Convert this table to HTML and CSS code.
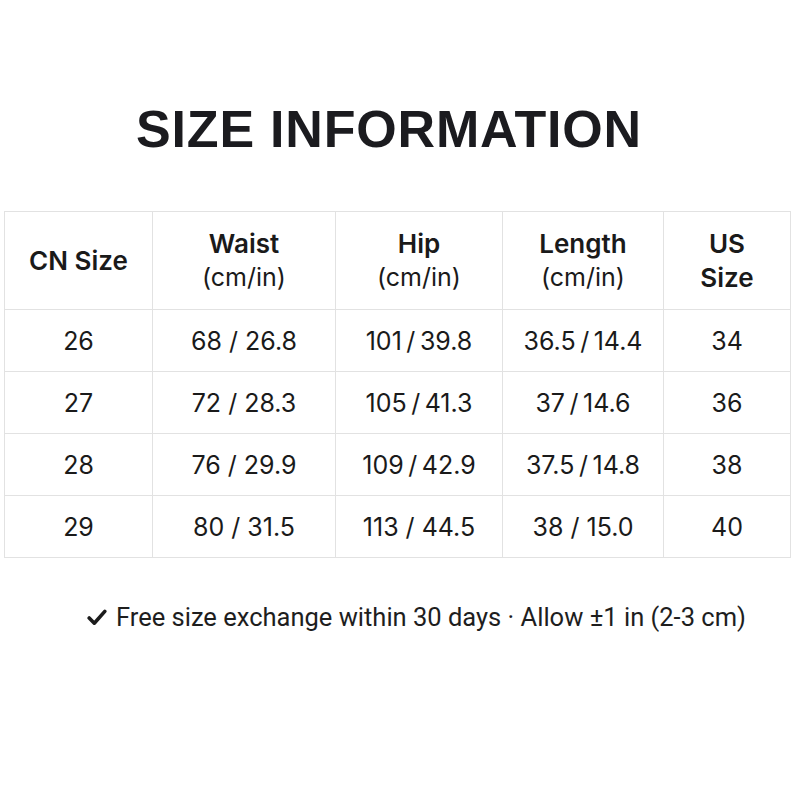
FILE: index.html
```html
<!DOCTYPE html>
<html>
<head>
<meta charset="utf-8">
<link rel="stylesheet" href="styles.css">
</head>
<body>
<div class="page">
  <h1 class="title">SIZE INFORMATION</h1>
  <table class="sizes">
    <colgroup>
      <col class="c1"><col class="c2"><col class="c3"><col class="c4"><col class="c5">
    </colgroup>
    <thead>
      <tr>
        <th><span class="h">CN Size</span></th>
        <th><span class="h">Waist</span><span class="sub">(cm/in)</span></th>
        <th><span class="h">Hip</span><span class="sub">(cm/in)</span></th>
        <th><span class="h">Length</span><span class="sub">(cm/in)</span></th>
        <th><span class="h">US</span><span class="h">Size</span></th>
      </tr>
    </thead>
    <tbody>
      <tr><td>26</td><td>68 / 26.8</td><td>101&#8201;/&#8201;39.8</td><td>36.5&#8201;/&#8201;14.4</td><td>34</td></tr>
      <tr><td>27</td><td>72 / 28.3</td><td>105&#8201;/&#8201;41.3</td><td>37&#8201;/&#8201;14.6</td><td>36</td></tr>
      <tr><td>28</td><td>76 / 29.9</td><td>109&#8201;/&#8201;42.9</td><td>37.5&#8201;/&#8201;14.8</td><td>38</td></tr>
      <tr><td>29</td><td>80 / 31.5</td><td>113 / 44.5</td><td>38 / 15.0</td><td>40</td></tr>
    </tbody>
  </table>
  <p class="note">
    <svg class="check" viewBox="0 0 20 17" width="20" height="17"><path d="M2.2 9 L7.3 14.2 L17.8 2.4" fill="none" stroke="#1c1c1c" stroke-width="3.6" stroke-linecap="round" stroke-linejoin="round"/></svg>
    <span>Free size exchange within 30 days · Allow ±1 in (2-3 cm)</span>
  </p>
</div>
</body>
</html>
```
FILE: styles.css
```css
html, body {
  margin: 0;
  padding: 0;
  background: #ffffff;
}
.page {
  width: 794px;
  height: 794px;
  padding: 99px 4px 0 4px;
  box-sizing: border-box;
}
.title {
  margin: 0;
  font-family: "Liberation Sans", Arial, sans-serif;
  font-weight: 700;
  font-size: 52px;
  line-height: 60px;
  color: #1b1b1f;
  text-align: center;
  padding-right: 16px;
  letter-spacing: 0.8px;
}
.sizes {
  margin-top: 52px;
  width: 786px;
  border-collapse: collapse;
  table-layout: fixed;
  font-family: Inter, "Noto Sans", sans-serif;
  color: #1a1a1a;
}
.c1 { width: 148px; }
.c2 { width: 183px; }
.c3 { width: 167px; }
.c4 { width: 161px; }
.c5 { width: 127px; }
.sizes th, .sizes td {
  border: 1.5px solid #e2e2e2;
  text-align: center;
  vertical-align: middle;
  padding: 0;
}
.sizes thead tr { height: 98px; }
.sizes tbody tr { height: 62px; }
.h {
  display: block;
  font-size: 26px;
  font-weight: 600;
  line-height: 34px;
}
.sub {
  display: block;
  font-size: 25px;
  font-weight: 400;
  line-height: 33px;
}
.sizes td {
  font-size: 25px;
  font-weight: 400;
}
.note {
  margin: 44px 0 0 0;
  padding-left: 83px;
  display: flex;
  align-items: center;
  gap: 9px;
  font-family: Roboto, "Liberation Sans", sans-serif;
  font-size: 25.5px;
  color: #1e1e1e;
}
.check { flex: none; }
```
